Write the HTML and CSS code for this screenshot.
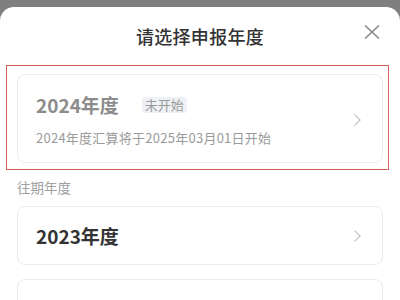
FILE: index.html
```html
<!DOCTYPE html>
<html lang="zh-CN">
<head>
    <meta charset="UTF-8">
    <meta name="viewport" content="width=device-width, initial-scale=1.0">
    <title>请选择申报年度</title>
    <link rel="stylesheet" href="styles.css">
</head>
<body>
    <div class="sheet">
        <div class="sheet-header">
            <h1>请选择申报年度</h1>
            <button class="close-btn" aria-label="关闭">
                <svg width="16" height="14" viewBox="0 0 16 14">
                    <path d="M1 0.5 L15 13.5 M15 0.5 L1 13.5" stroke="#8a8a8a" stroke-width="1.6" fill="none"/>
                </svg>
            </button>
        </div>

        <div class="sheet-body">
            <div class="highlight">
                <div class="year-card disabled">
                    <div class="year-info">
                        <div class="year-title">
                            <span class="year-name">2024年度</span>
                            <span class="badge">未开始</span>
                        </div>
                        <div class="year-desc">2024年度汇算将于2025年03月01日开始</div>
                    </div>
                    <span class="chevron"></span>
                </div>
            </div>

            <div class="section-label">往期年度</div>

            <div class="year-card">
                <div class="year-info">
                    <div class="year-title">
                        <span class="year-name">2023年度</span>
                    </div>
                </div>
                <span class="chevron"></span>
            </div>

            <!-- 下一张卡片只露出顶部 -->
            <div class="year-card">
                <div class="year-info">
                    <div class="year-title"></div>
                </div>
                <span class="chevron"></span>
            </div>
        </div>
    </div>
</body>
</html>
```

FILE: styles.css
```css
* {
    margin: 0;
    padding: 0;
    box-sizing: border-box;
    font-family: 'Noto Sans CJK SC', 'Noto Sans', sans-serif;
}

body {
    background-color: #7f7f7f;
    padding-top: 7px;
    overflow: hidden;
}

.sheet {
    background: #fff;
    border-radius: 14px 14px 0 0;
    min-height: 400px;
}

.sheet-header {
    position: relative;
    height: 58px;
    display: flex;
    align-items: center;
    justify-content: center;
}

.sheet-header h1 {
    font-size: 18px;
    font-weight: 500;
    color: #333;
    line-height: 26px;
    letter-spacing: 0.3px;
}

.close-btn {
    position: absolute;
    right: 19px;
    top: 17px;
    width: 18px;
    height: 16px;
    background: none;
    border: none;
    display: flex;
    align-items: center;
    justify-content: center;
}

.sheet-body {
    padding: 0 17px;
}

.highlight {
    border: 1px solid #d2625c;
    margin: 0 -6px 0 -11px;
    padding: 8px 5px 6px 10px;
}

.year-card {
    display: flex;
    align-items: center;
    background: #fff;
    border: 1px solid #ebebeb;
    border-radius: 8px;
    padding: 16px 21px 15px 18px;
    margin-bottom: 14px;
}

.year-card.disabled {
    padding: 17px 21px 15px 18px;
    margin-bottom: 0;
    border-color: #eeeaec;
}

.year-info {
    flex: 1;
}

.year-title {
    display: flex;
    align-items: center;
    height: 26px;
}

.year-name {
    font-size: 19px;
    font-weight: 700;
    color: #333;
    line-height: 26px;
}

.disabled .year-name {
    color: #8c8c8c;
}

.badge {
    margin-left: 23px;
    background: #eef1f6;
    color: #9a9a9a;
    font-size: 13px;
    line-height: 16px;
    padding: 0 3px;
    border-radius: 3px;
}

.year-desc {
    margin-top: 11px;
    font-size: 13px;
    line-height: 18px;
    letter-spacing: 0.25px;
    color: #9a9a9a;
}

.chevron {
    width: 8px;
    height: 8px;
    border-top: 1.3px solid #bdbdbd;
    border-right: 1.3px solid #bdbdbd;
    transform: rotate(45deg);
    margin-right: 2px;
}

.section-label {
    margin: 8px 0 10px;
    font-size: 13.5px;
    line-height: 18px;
    color: #a0a0a0;
}
```
